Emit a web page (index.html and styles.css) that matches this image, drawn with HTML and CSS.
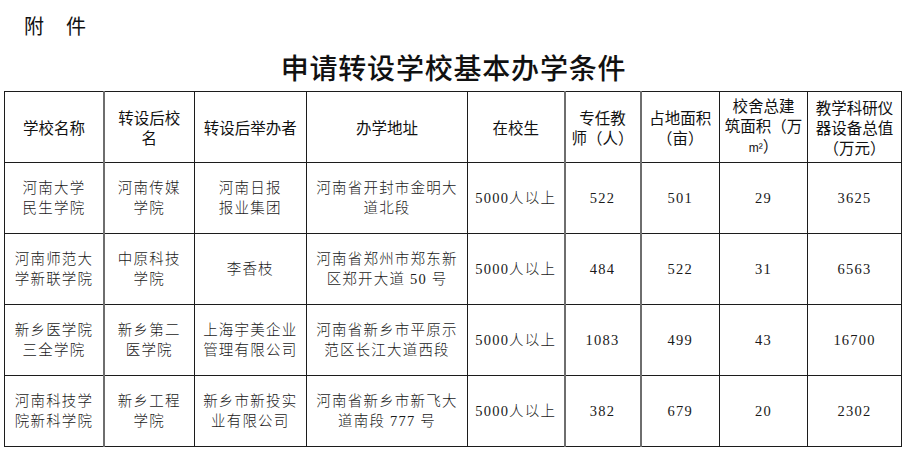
FILE: index.html
```html
<!DOCTYPE html>
<html lang="zh-CN">
<head>
<meta charset="utf-8">
<title>申请转设学校基本办学条件</title>
<link rel="stylesheet" href="styles.css">
</head>
<body>
<div class="page">
  <p class="attach">附　件</p>
  <h1 class="title">申请转设学校基本办学条件</h1>
  <table class="cond">
    <colgroup>
      <col class="c1"><col class="c2"><col class="c3"><col class="c4"><col class="c5"><col class="c6"><col class="c7"><col class="c8"><col class="c9">
    </colgroup>
    <thead>
      <tr>
        <th>学校名称</th>
        <th class="gl">转设后校<br>名</th>
        <th>转设后举办者</th>
        <th>办学地址</th>
        <th>在校生</th>
        <th class="gl">专任教<br>师（人）</th>
        <th class="gl">占地面积<br>（亩）</th>
        <th>校舍总建<br>筑面积（万<br><span class="m2">m²</span>）</th>
        <th>教学科研仪<br>器设备总值<br>（万元）</th>
      </tr>
    </thead>
    <tbody>
      <tr>
        <td>河南大学<br>民生学院</td>
        <td class="gl">河南传媒<br>学院</td>
        <td>河南日报<br>报业集团</td>
        <td>河南省开封市金明大<br>道北段</td>
        <td>5000人以上</td>
        <td class="gl">522</td>
        <td class="gl">501</td>
        <td>29</td>
        <td>3625</td>
      </tr>
      <tr>
        <td>河南师范大<br>学新联学院</td>
        <td class="gl">中原科技<br>学院</td>
        <td>李香枝</td>
        <td>河南省郑州市郑东新<br>区郑开大道 50 号</td>
        <td>5000人以上</td>
        <td class="gl">484</td>
        <td class="gl">522</td>
        <td>31</td>
        <td>6563</td>
      </tr>
      <tr>
        <td>新乡医学院<br>三全学院</td>
        <td class="gl">新乡第二<br>医学院</td>
        <td>上海宇美企业<br>管理有限公司</td>
        <td>河南省新乡市平原示<br>范区长江大道西段</td>
        <td>5000人以上</td>
        <td class="gl">1083</td>
        <td class="gl">499</td>
        <td>43</td>
        <td>16700</td>
      </tr>
      <tr>
        <td>河南科技学<br>院新科学院</td>
        <td class="gl">新乡工程<br>学院</td>
        <td>新乡市新投实<br>业有限公司</td>
        <td>河南省新乡市新飞大<br>道南段 777 号</td>
        <td>5000人以上</td>
        <td class="gl">382</td>
        <td class="gl">679</td>
        <td>20</td>
        <td>2302</td>
      </tr>
    </tbody>
  </table>
</div>
</body>
</html>
```
FILE: styles.css
```css
html, body {
  margin: 0;
  padding: 0;
  background: #ffffff;
}

.page {
  width: 907px;
  color: #111111;
  font-family: "Noto Sans CJK SC", "Noto Sans", sans-serif;
}

.attach {
  margin: 0;
  padding: 14px 0 0 24px;
  font-size: 20px;
  line-height: 24px;
  letter-spacing: 1px;
  font-weight: 400;
}

.title {
  margin: 11px 0 0 0;
  font-size: 28px;
  line-height: 36px;
  font-weight: 500;
  letter-spacing: 0.8px;
  text-align: center;
}

.cond {
  margin: 6px 0 0 4px;
  width: 897px;
  table-layout: fixed;
  border-collapse: collapse;
}

.c1 { width: 99.5px; }
.c2 { width: 90px; }
.c3 { width: 112.5px; }
.c4 { width: 161px; }
.c5 { width: 97px; }
.c6 { width: 76px; }
.c7 { width: 79px; }
.c8 { width: 88px; }
.c9 { width: 94px; }

.cond th,
.cond td {
  border: 1px solid #1c1c1c;
  padding: 0;
  text-align: center;
  vertical-align: middle;
}

.cond th {
  height: 69.5px;
  font-size: 15.5px;
  line-height: 20px;
  font-weight: 400;
  color: #111111;
}

.cond td {
  height: 70.2px;
  font-family: "Liberation Serif", "Noto Sans CJK SC", serif;
  font-size: 14.5px;
  line-height: 20px;
  letter-spacing: 1.2px;
  font-weight: 300;
  color: #1a1a1a;
}

.cond .gl {
  border-left: 2px solid #6e6e6e;
}

.m2 {
  font-family: "Liberation Sans", sans-serif;
  font-size: 12px;
}
```
